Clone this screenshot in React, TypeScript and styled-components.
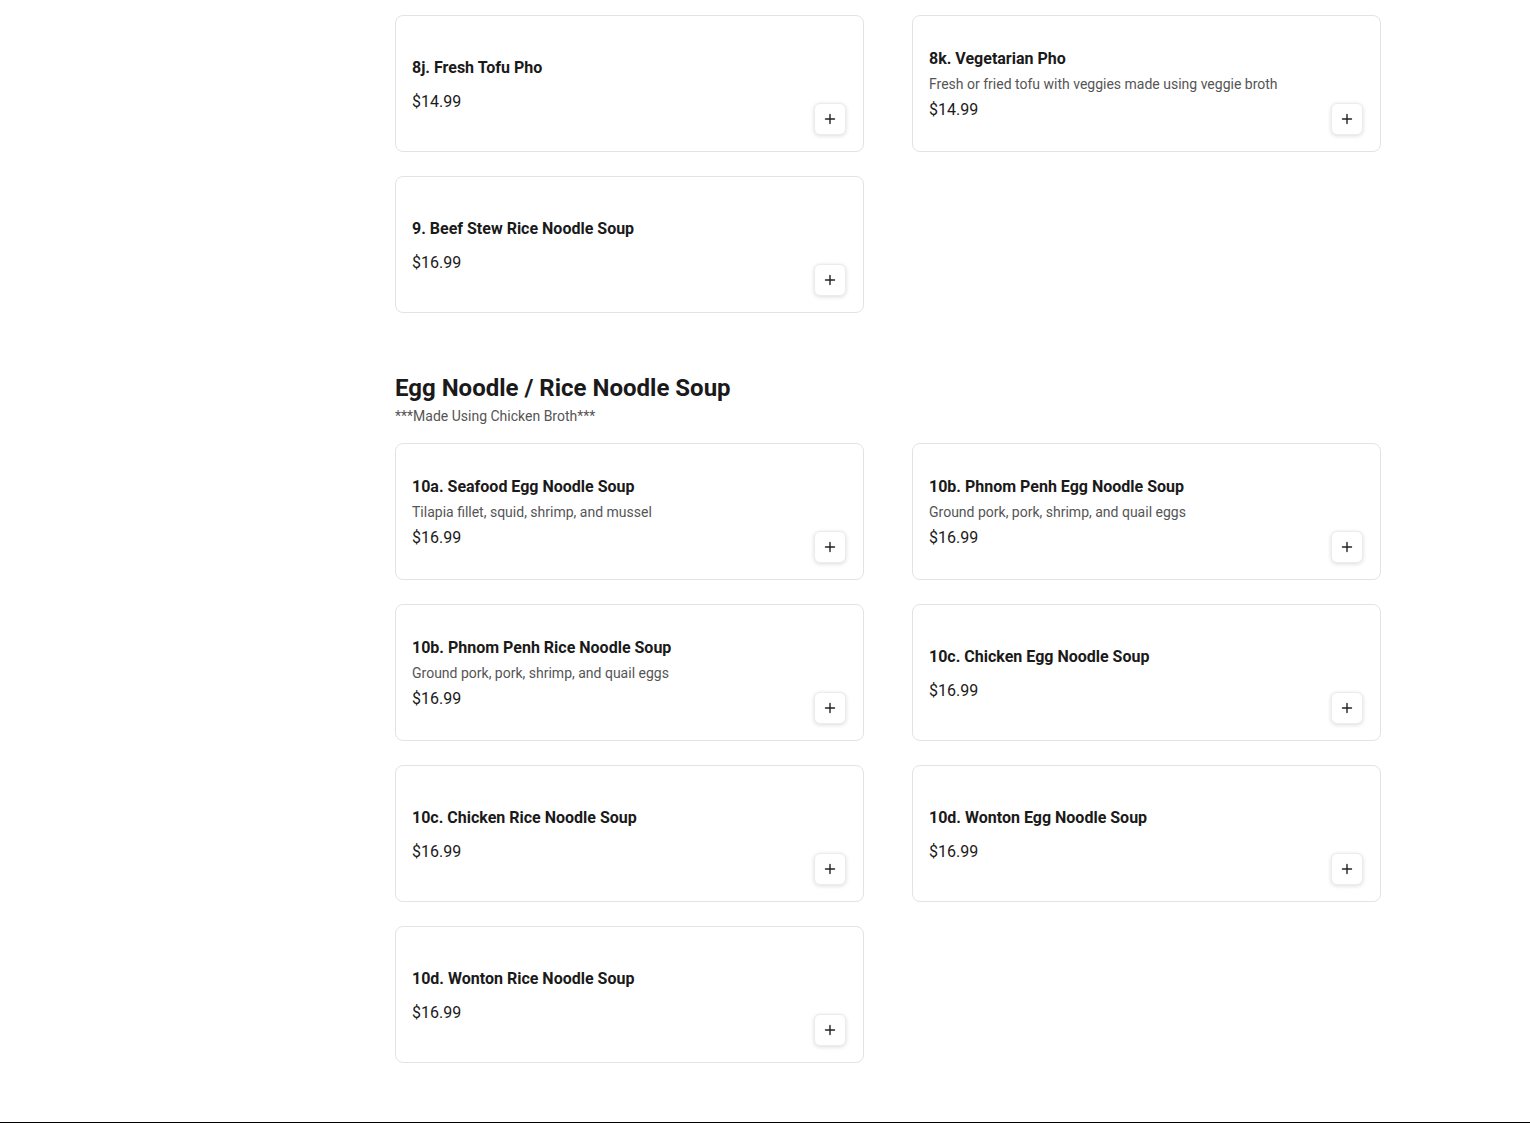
import React from "react";
import styled, { createGlobalStyle } from "styled-components";

const Global = createGlobalStyle`
  html, body { margin: 0; padding: 0; background: #fff; }
  body { font-family: Roboto, "Noto Sans", Arial, sans-serif; color: #1a1a1a; -webkit-font-smoothing: antialiased; }
  * { box-sizing: border-box; }
`;

const Page = styled.div`
  display: flex;
  flex-direction: column;
  min-height: 100vh;
`;

const Layout = styled.div`
  width: 100%;
  max-width: 1280px;
  margin: 0 auto;
  padding: 15px 24px 0 0;
  display: grid;
  grid-template-columns: 246px 1fr;
  column-gap: 24px;
`;

const Sidebar = styled.aside``;

const Main = styled.main`
  display: flex;
  flex-direction: column;
`;

const Section = styled.section`
  margin-bottom: 59px;
`;

const SectionHeader = styled.header`
  margin-bottom: 17px;
`;

const SectionTitle = styled.h2`
  margin: 0;
  font-size: 24px;
  line-height: 32px;
  font-weight: 700;
  color: #1a1a1a;
`;

const SectionNote = styled.p`
  margin: 2px 0 0;
  font-size: 14px;
  line-height: 20px;
  color: #555;
`;

const Grid = styled.div`
  display: grid;
  grid-template-columns: repeat(2, 1fr);
  column-gap: 48px;
  row-gap: 24px;
`;

const Card = styled.div`
  min-height: 137px;
  border: 1px solid #e3e3e3;
  border-radius: 8px;
  background: #fff;
  padding: 16px 17px 16px 16px;
  display: flex;
  align-items: center;
  justify-content: space-between;
`;

const Info = styled.div`
  display: flex;
  flex-direction: column;
  padding-top: 2px;
`;

const ItemName = styled.h3`
  margin: 0;
  font-size: 16px;
  line-height: 24px;
  font-weight: 700;
  color: #1a1a1a;
`;

const ItemDesc = styled.p`
  margin: 3px 0 0;
  font-size: 14px;
  line-height: 20px;
  color: #555;
`;

const Price = styled.div<{ $hasDesc: boolean }>`
  margin-top: ${(p) => (p.$hasDesc ? "4px" : "10px")};
  font-size: 16px;
  line-height: 24px;
  color: #1a1a1a;
`;

const AddButton = styled.button`
  align-self: flex-end;
  flex: none;
  width: 32px;
  height: 32px;
  padding: 0;
  border: 1px solid #ececec;
  border-radius: 6px;
  background: #fff;
  box-shadow: 0 1px 4px rgba(0, 0, 0, 0.14);
  display: flex;
  align-items: center;
  justify-content: center;
  color: #222;
  cursor: pointer;
`;

const Footer = styled.footer`
  background: #000;
  height: 200px;
`;

type Item = { name: string; desc?: string; price: string };

const pho: Item[] = [
  { name: "8j. Fresh Tofu Pho", price: "$14.99" },
  { name: "8k. Vegetarian Pho", desc: "Fresh or fried tofu with veggies made using veggie broth", price: "$14.99" },
  { name: "9. Beef Stew Rice Noodle Soup", price: "$16.99" },
];

const egg: Item[] = [
  { name: "10a. Seafood Egg Noodle Soup", desc: "Tilapia fillet, squid, shrimp, and mussel", price: "$16.99" },
  { name: "10b. Phnom Penh Egg Noodle Soup", desc: "Ground pork, pork, shrimp, and quail eggs", price: "$16.99" },
  { name: "10b. Phnom Penh Rice Noodle Soup", desc: "Ground pork, pork, shrimp, and quail eggs", price: "$16.99" },
  { name: "10c. Chicken Egg Noodle Soup", price: "$16.99" },
  { name: "10c. Chicken Rice Noodle Soup", price: "$16.99" },
  { name: "10d. Wonton Egg Noodle Soup", price: "$16.99" },
  { name: "10d. Wonton Rice Noodle Soup", price: "$16.99" },
];

const PlusIcon = () => (
  <svg width="12" height="12" viewBox="0 0 12 12" fill="none">
    <path d="M6 1.5v9M1.5 6h9" stroke="currentColor" strokeWidth="1.4" strokeLinecap="round" />
  </svg>
);

const MenuCard = ({ item }: { item: Item }) => (
  <Card>
    <Info>
      <ItemName>{item.name}</ItemName>
      {item.desc && <ItemDesc>{item.desc}</ItemDesc>}
      <Price $hasDesc={!!item.desc}>{item.price}</Price>
    </Info>
    <AddButton aria-label={`Add ${item.name}`}>
      <PlusIcon />
    </AddButton>
  </Card>
);

export default function App() {
  return (
    <Page>
      <Global />
      <Layout>
        <Sidebar />
        <Main>
          <Section>
            <Grid>
              {pho.map((it, i) => (
                <MenuCard key={i} item={it} />
              ))}
            </Grid>
          </Section>
          <Section>
            <SectionHeader>
              <SectionTitle>Egg Noodle / Rice Noodle Soup</SectionTitle>
              <SectionNote>***Made Using Chicken Broth***</SectionNote>
            </SectionHeader>
            <Grid>
              {egg.map((it, i) => (
                <MenuCard key={i} item={it} />
              ))}
            </Grid>
          </Section>
        </Main>
      </Layout>
      <Footer />
    </Page>
  );
}
